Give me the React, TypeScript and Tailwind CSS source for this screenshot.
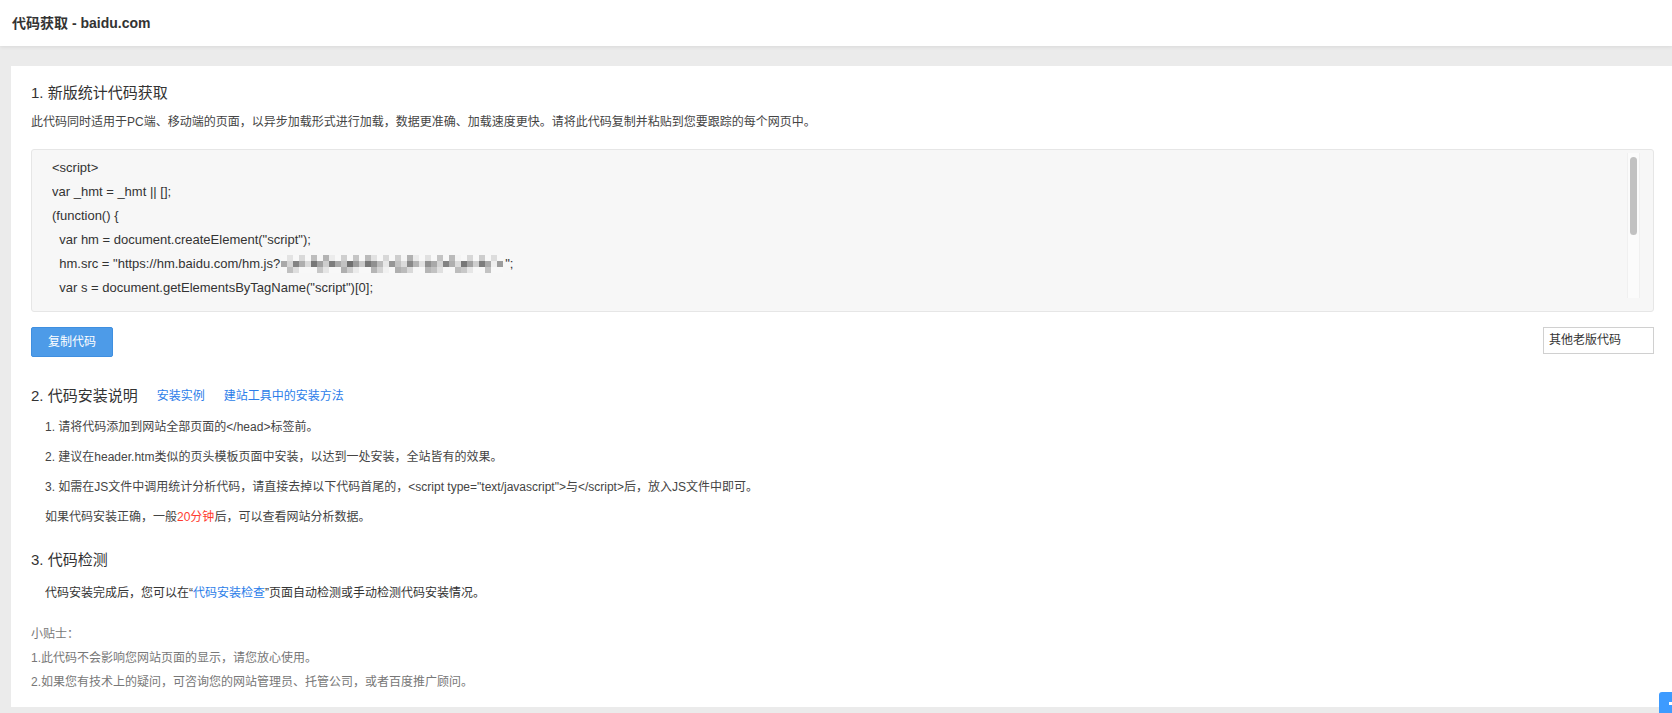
import React from 'react';

const codeLines = [
  '<script>',
  'var _hmt = _hmt || [];',
  '(function() {',
  '  var hm = document.createElement("script");',
  '__SRC__',
  '  var s = document.getElementsByTagName("script")[0]; ',
];

// pixelated (mosaic) site key
function Mosaic() {
  const cols = 37;
  const rows = 3;
  const cells: React.ReactElement[] = [];
  for (let c = 0; c < cols; c++) {
    for (let r = 0; r < rows; r++) {
      const seed = (c * 37 + r * 53 + c * r * 11 + (c % 5) * 17) % 100;
      let g = 235 - Math.round(seed * 1.25);
      if (r !== 1) g = Math.min(248, g + 60);
      if (c > 34) g = Math.min(248, g + 45);
      const hex = g.toString(16).padStart(2, '0');
      cells.push(<rect key={`${c}-${r}`} x={c * 6} y={r * 6} width={6} height={6} fill={`#${hex}${hex}${hex}`} />);
    }
  }
  return (
    <svg width={222} height={18} className="inline-block align-middle -mt-[2px] ml-[1px] mr-[2px]" viewBox="0 0 222 18">
      {cells}
    </svg>
  );
}

export default function App() {
  return (
    <div className="relative min-h-screen bg-[#ebebeb] pb-[6px] font-['Liberation_Sans','Noto_Sans_CJK_SC',sans-serif] text-[#333]">
      <div className="h-[46px] bg-white flex items-center pl-[12px] shadow-[0_1px_4px_rgba(0,0,0,0.08)]">
        <h1 className="text-[14px] font-bold text-[#333]">代码获取 - baidu.com</h1>
      </div>

      <div className="mt-[20px] ml-[11px] bg-white pl-[20px] pr-[18px] pt-[17px] pb-[13px]">
        <h2 className="text-[15px] leading-[20px] text-[#333]">1. 新版统计代码获取</h2>
        <p className="mt-[10px] text-[12px] leading-[18px] text-[#444]">
          此代码同时适用于PC端、移动端的页面，以异步加载形式进行加载，数据更准确、加载速度更快。请将此代码复制并粘贴到您要跟踪的每个网页中。
        </p>

        <div className="relative mt-[18px] h-[163px] bg-[#f7f7f7] border border-[#e6e6e6] rounded-[3px] pl-[20px] pt-[6px]">
          <div className="h-[144px] overflow-hidden text-[13px] leading-[24px] text-[#333] whitespace-pre">
            {codeLines.map((line, i) =>
              line === '__SRC__' ? (
                <div key={i}>
                  {'  hm.src = "https://hm.baidu.com/hm.js?'}
                  <Mosaic />
                  {'";'}
                </div>
              ) : (
                <div key={i}>{line}</div>
              )
            )}
          </div>
          <div className="absolute right-[13px] top-[3px] bottom-[13px] w-[13px] bg-[#fbfbfb] border-x border-[#f0f0f0]">
            <div className="ml-[2px] mt-[4px] w-[7px] h-[78px] rounded-full bg-[#c1c1c1]" />
          </div>
        </div>

        <div className="mt-[15px] flex items-start justify-between">
          <button className="h-[30px] w-[82px] rounded-[2px] bg-[#4d9be8] border border-[#3f8fe0] text-white text-[12px] leading-[28px]">
            复制代码
          </button>
          <div className="h-[27px] w-[111px] border border-[#d0d0d0] bg-white text-[12px] leading-[25px] pl-[5px] text-[#333]">
            其他老版代码
          </div>
        </div>

        <div className="mt-[29px] flex items-center h-[20px]">
          <h2 className="text-[15px] leading-[20px] text-[#333]">2. 代码安装说明</h2>
          <a className="ml-[19px] text-[12px] text-[#2b7de9]">安装实例</a>
          <a className="ml-[19px] text-[12px] text-[#2b7de9]">建站工具中的安装方法</a>
        </div>

        <div className="mt-[6px] pl-[14px] text-[12px] leading-[30px] text-[#444]">
          <p>1. 请将代码添加到网站全部页面的&lt;/head&gt;标签前。</p>
          <p>2. 建议在header.htm类似的页头模板页面中安装，以达到一处安装，全站皆有的效果。</p>
          <p>3. 如需在JS文件中调用统计分析代码，请直接去掉以下代码首尾的，&lt;script type="text/javascript"&gt;与&lt;/script&gt;后，放入JS文件中即可。</p>
          <p>
            如果代码安装正确，一般<span className="text-[#ff3b30]">20分钟</span>后，可以查看网站分析数据。
          </p>
        </div>

        <h2 className="mt-[18px] text-[15px] leading-[20px] text-[#333]">3. 代码检测</h2>
        <p className="mt-[8px] pl-[14px] text-[12px] leading-[30px] text-[#333]">
          代码安装完成后，您可以在“<a className="text-[#2b7de9]">代码安装检查</a>”页面自动检测或手动检测代码安装情况。
        </p>

        <div className="mt-[14px] text-[12px] leading-[24px] text-[#777]">
          <p>小贴士：</p>
          <p>1.此代码不会影响您网站页面的显示，请您放心使用。</p>
          <p>2.如果您有技术上的疑问，可咨询您的网站管理员、托管公司，或者百度推广顾问。</p>
        </div>
      </div>

      <div className="absolute left-[1659px] top-[692px] w-[13px] h-[21px] bg-[#3d9bff] rounded-tl-[3px]">
        <div className="ml-[10px] mt-[10px] w-[3px] h-[3px] bg-white" />
      </div>
    </div>
  );
}
